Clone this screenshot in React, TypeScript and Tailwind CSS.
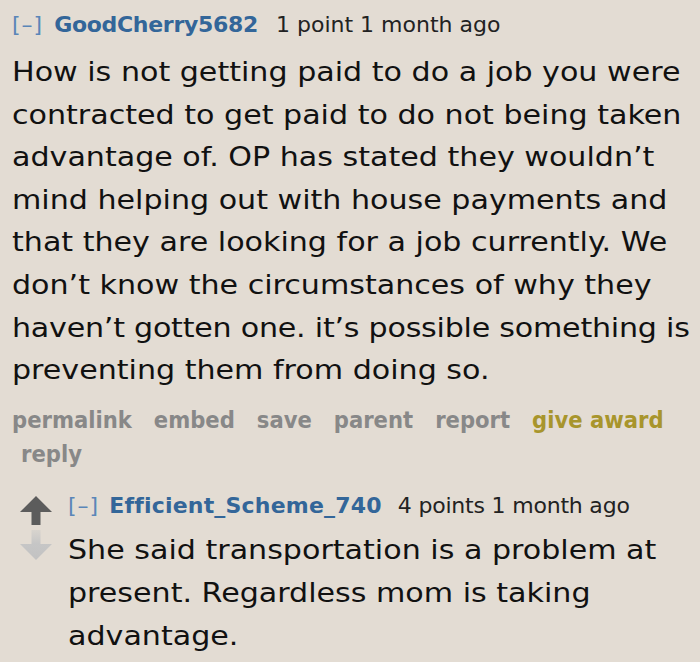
import React from "react";

const body1 = [
  "How is not getting paid to do a job you were",
  "contracted to get paid to do not being taken",
  "advantage of. OP has stated they wouldn\u2019t",
  "mind helping out with house payments and",
  "that they are looking for a job currently. We",
  "don\u2019t know the circumstances of why they",
  "haven\u2019t gotten one. it\u2019s possible something is",
  "preventing them from doing so.",
];

const body2 = [
  "She said transportation is a problem at",
  "present. Regardless mom is taking",
  "advantage.",
];

const cond = { fontFamily: '"DejaVu Sans Condensed", "DejaVu Sans", sans-serif' };

export default function App() {
  return (
    <div className="w-[700px] h-[662px] overflow-hidden bg-[#e3dcd3] text-[#111]" style={{ fontFamily: '"DejaVu Sans", Verdana, sans-serif' }}>
      <div className="pl-[12px] pt-[10px]">
        <div className="flex items-baseline text-[22px] leading-[30px] whitespace-nowrap">
          <span className="text-[#5a86b8] tracking-[1px]">[–]</span>
          <span className="ml-[11px] font-bold text-[#336699] tracking-[-0.3px]">GoodCherry5682</span>
          <span className="ml-[18px] text-[#222]">1 point 1 month ago</span>
        </div>
        <div className="mt-[11px] text-[26px] leading-[42.6px] whitespace-nowrap origin-left scale-x-[1.158]">
          {body1.map((l, i) => (
            <div key={i} className={i === 6 ? "tracking-[-0.2px]" : ""}>{l}</div>
          ))}
        </div>
        <div className="mt-[11px] flex text-[23.5px] leading-[34px] font-bold text-[#888888] whitespace-nowrap" style={cond}>
          <span className="mr-[22px]">permalink</span>
          <span className="mr-[22px]">embed</span>
          <span className="mr-[22px]">save</span>
          <span className="mr-[22px]">parent</span>
          <span className="mr-[22px]">report</span>
          <span className="text-[#a8952c]">give award</span>
        </div>
        <div className="pl-[9px] text-[23.5px] leading-[34px] font-bold text-[#888888]" style={cond}>
          reply
        </div>
      </div>
      <div className="flex mt-[10px] pl-[20px]">
        <div className="flex flex-col w-[32px] pt-[15px] gap-[5px]">
          <svg width="32" height="29" viewBox="0 0 32 29">
            <path d="M16 0 L32 16 L20.5 16 L20.5 29 L11.5 29 L11.5 16 L0 16 Z" fill="#5c5c5c" />
          </svg>
          <svg width="32" height="30" viewBox="0 0 32 30">
            <defs>
              <linearGradient id="dg" x1="0" y1="0" x2="0" y2="1">
                <stop offset="0" stopColor="#d8d4ce" />
                <stop offset="0.45" stopColor="#c6c6c6" />
                <stop offset="1" stopColor="#c2c2c2" />
              </linearGradient>
            </defs>
            <path d="M16 30 L32 14 L20.5 14 L20.5 0 L11.5 0 L11.5 14 L0 14 Z" fill="url(#dg)" />
          </svg>
        </div>
        <div className="ml-[16px]">
          <div className="flex items-baseline text-[22px] leading-[30px] whitespace-nowrap pt-[10px]">
            <span className="text-[#5a86b8] tracking-[1px]">[–]</span>
            <span className="ml-[10px] font-bold text-[#336699] tracking-[0.2px]">Efficient_Scheme_740</span>
            <span className="ml-[16px] text-[#222] tracking-[-0.2px]">4 points 1 month ago</span>
          </div>
          <div className="mt-[8px] text-[26px] leading-[43px] whitespace-nowrap origin-left scale-x-[1.158]">
            {body2.map((l, i) => (
              <div key={i}>{l}</div>
            ))}
          </div>
        </div>
      </div>
    </div>
  );
}
